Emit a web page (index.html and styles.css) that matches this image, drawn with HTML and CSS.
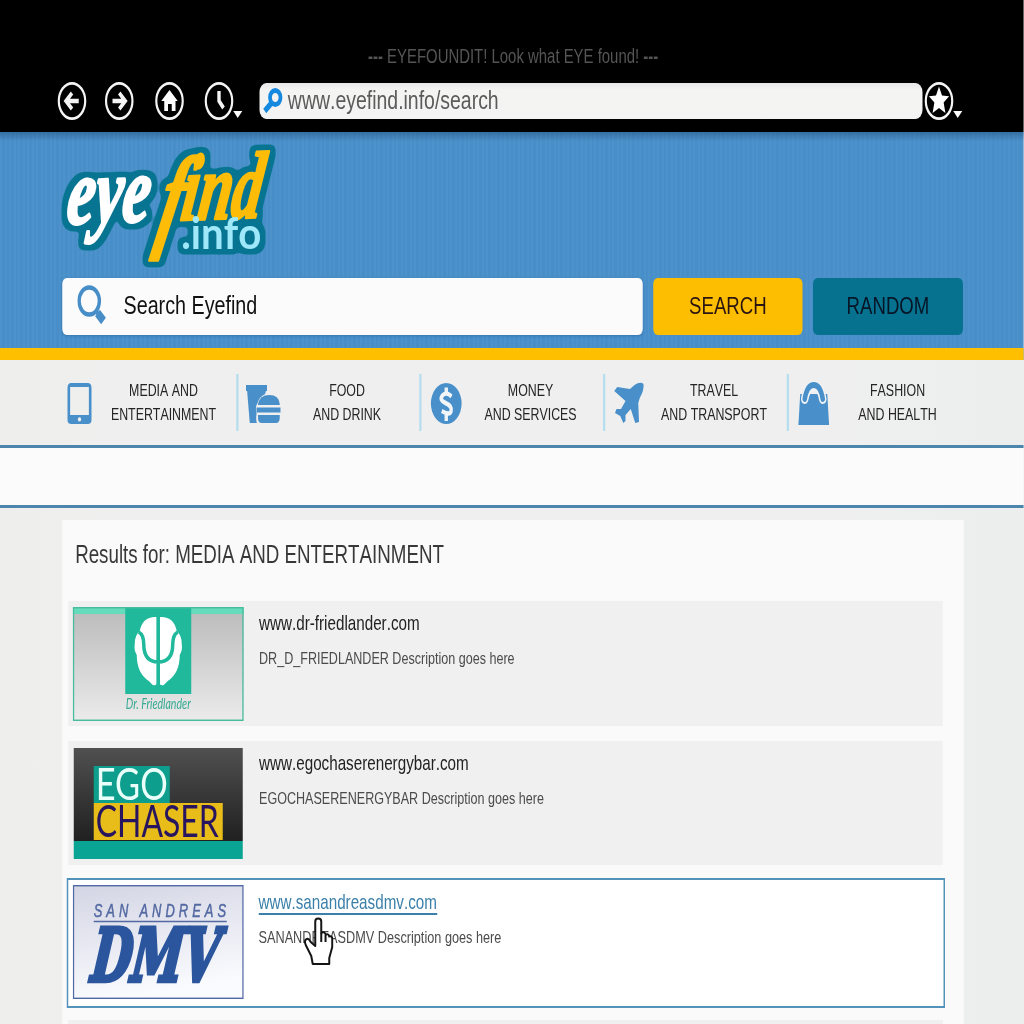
FILE: index.html
```html
<!DOCTYPE html>
<html lang="en">
<head>
<meta charset="utf-8">
<title>Eyefind.info</title>
<link rel="stylesheet" href="styles.css">
</head>
<body>
<div class="screen">
  <header class="browser">
    <p class="ticker"><b>---</b> EYEFOUNDIT! Look what EYE found! <b>---</b></p>
    <div class="toolbar">
      <svg class="tool" viewBox="0 0 40 40"><circle cx="20" cy="20" r="17.6"/><path class="thick" d="M29 20H13M20 12l-8 8 8 8"/></svg>
      <svg class="tool forward" viewBox="0 0 40 40"><circle cx="20" cy="20" r="17.6"/><path class="thick" d="M11 20h16M20 12l8 8-8 8"/></svg>
      <svg class="tool home" viewBox="0 0 40 40"><circle cx="20" cy="20" r="17.6"/><path class="solid" d="M20 9L31 20h-3v10h-5v-7h-5v7h-5V20H9z"/></svg>
      <svg class="tool history" viewBox="0 0 54 40"><circle cx="20" cy="20" r="17.6"/><path class="thick" d="M20 10v10l6 7"/><path class="solid" d="M39 30h12l-6 7z"/></svg>
      <div class="address">
        <svg class="glass" viewBox="0 0 28 26"><circle cx="17" cy="9.5" r="7"/><path d="M12 15L3 23"/></svg>
        <span>www.eyefind.info/search</span>
      </div>
      <svg class="tool star" viewBox="0 0 54 40"><circle cx="20" cy="20" r="17.6"/><path class="solid" d="M20 5.500l4 9 9.500.8-7.300 6.200 2.300 10.500-8.500-5-8.500 5 2.300-10.500L6.500 15.300l9.500-.8z"/><path class="solid" d="M39 30h12l-6 7z"/></svg>
    </div>
  </header>

  <section class="masthead">
    <svg class="logo" viewBox="0 0 224 128" preserveAspectRatio="none">
      <defs>
        <filter id="halo" x="-10%" y="-15%" width="120%" height="130%" color-interpolation-filters="sRGB">
          <feMorphology in="SourceAlpha" operator="dilate" radius="3.500"/>
          <feGaussianBlur stdDeviation="2.400"/>
          <feComponentTransfer result="edge"><feFuncA type="linear" slope="7" intercept="-1.400"/></feComponentTransfer>
          <feFlood flood-color="#077591"/>
          <feComposite in2="edge" operator="in"/>
          <feMerge><feMergeNode/><feMergeNode in="SourceGraphic"/></feMerge>
        </filter>
      </defs>
      <g filter="url(#halo)">
        <text class="word white" transform="translate(6 82) rotate(-2) skewX(-8)" textLength="83" lengthAdjust="spacingAndGlyphs">eye</text>
        <text class="word gold eff" transform="translate(95 94) skewX(-12) scale(.62 1)">f</text>
        <text class="word gold" transform="translate(120 78) rotate(-2) skewX(-10)" textLength="80" lengthAdjust="spacingAndGlyphs">ind</text>
        <text class="dot" x="122" y="107" textLength="80" lengthAdjust="spacingAndGlyphs">.info</text>
      </g>
    </svg>
    <div class="search">
      <div class="field">
        <svg class="lens" viewBox="0 0 40 40"><circle cx="16" cy="16" r="13.500"/><path class="neck" d="M25 26l4 4"/><path class="grip" d="M27 28l8 8"/></svg>
        <span>Search Eyefind</span>
      </div>
      <div class="button go">SEARCH</div>
      <div class="button random">RANDOM</div>
    </div>
  </section>

  <nav class="categories">
    <a class="category"><svg viewBox="0 0 52 56"><path fill-rule="evenodd" d="M15 7h22q5 0 5 5v32q0 4-5 4H15q-5 0-5-4V12q0-5 5-5zm-1.500 4v28h25V11zM26 41.200a2.200 2.200 0 1 0 .01 0z"/></svg><span>MEDIA AND<br>ENTERTAINMENT</span></a>
    <a class="category"><svg viewBox="0 0 52 56"><path d="M3 9h28v6h-1.500l-1 3q-8 3-10 9-3 3-2 8 1 3 0 6 0 4 1 6H8L4.500 15H3z"/><path d="M19 28q2-9 15-9t14 9v1H19z"/><path d="M17 31.500h32v5H17z"/><path d="M19 39h29v2q0 6-5 6H24q-5 0-5-5z"/></svg><span>FOOD<br>AND DRINK</span></a>
    <a class="category"><svg viewBox="0 0 52 56"><circle cx="26" cy="27.500" r="20.500"/><path class="cut" d="M33 20.500Q26 15 21 19.500t4 7.500q9 3 7.500 8T20 35M26 11.500v6M26 37v8"/></svg><span>MONEY<br>AND SERVICES</span></a>
    <a class="category"><svg viewBox="0 0 52 56"><path d="M44 8q1 6-5 14l-2 5 1 19-5 1-6-14-7 6v6l-3 2-4-7-7-3 2-4h6l6-8-15-10 4-4 17 2 6-4q8-4 12-1z"/></svg><span>TRAVEL<br>AND TRANSPORT</span></a>
    <a class="category"><svg viewBox="0 0 52 56"><path d="M8 18h36l2.500 31h-41z"/><path class="gap" d="M14 23q3-13 12-13t12 13"/><path class="handle" d="M14 23q3-14 12-14t12 14"/></svg><span>FASHION<br>AND HEALTH</span></a>
  </nav>
  <div class="strip"></div>

  <main class="results">
    <h1>Results for: MEDIA AND ENTERTAINMENT</h1>
    <article class="result">
      <svg class="thumb" viewBox="0 0 171 114" preserveAspectRatio="none">
        <defs><linearGradient id="silver" x1="0" y1="0" x2="0" y2="1"><stop offset="0" stop-color="#bababa"/><stop offset="1" stop-color="#ebebeb"/></linearGradient></defs>
        <rect width="171" height="114" fill="url(#silver)"/>
        <rect width="171" height="7" fill="#67dcbd"/>
        <rect x="52.500" width="66" height="87" fill="#20b99b"/>
        <path fill="#fff" d="M84 10q-14-1-17 14-5 4-5 13-1 6 2 11 0 18 12 26l4 4q4 1 4-2z"/>
        <path fill="#fff" d="M87 10q14-1 17 14 5 4 5 13 1 6-2 11 0 18-12 26l-4 4q-4 1-4-2z"/>
        <path fill="none" stroke="#20b99b" stroke-width="3.500" d="M66 25q5 3 5 12 0 18 14.500 18t14.500-18q0-9 5-12M85.500 9v70"/>
        <text class="doctor" x="53" y="102" textLength="65" lengthAdjust="spacingAndGlyphs">Dr. Friedlander</text>
        <rect x=".7" y=".7" width="169.600" height="112.600" fill="none" stroke="#48bd9d" stroke-width="1.500"/>
      </svg>
      <div class="info"><a>www.dr-friedlander.com</a><p>DR_D_FRIEDLANDER Description goes here</p></div>
    </article>
    <article class="result second">
      <svg class="thumb" viewBox="0 0 171 114" preserveAspectRatio="none">
        <defs><linearGradient id="coal" x1="0" y1="0" x2="0" y2="1"><stop offset="0" stop-color="#505050"/><stop offset="1" stop-color="#202020"/></linearGradient></defs>
        <rect x="1" y="1" width="169" height="93" fill="url(#coal)"/>
        <rect x="1" y="94" width="169" height="18" fill="#09a493"/>
        <rect x="21" y="19" width="76" height="37" fill="#0d9e8d"/>
        <rect x="21" y="56" width="129" height="37" fill="#e8bd19"/>
        <text class="ego" x="23" y="53" textLength="72" lengthAdjust="spacingAndGlyphs">EGO</text>
        <text class="chaser" x="23" y="90" textLength="123" lengthAdjust="spacingAndGlyphs">CHASER</text>
      </svg>
      <div class="info"><a>www.egochaserenergybar.com</a><p>EGOCHASERENERGYBAR Description goes here</p></div>
    </article>
    <article class="result selected">
      <svg class="thumb" viewBox="0 0 171 114" preserveAspectRatio="none">
        <defs><linearGradient id="mist" x1="0" y1="0" x2=".25" y2="1"><stop offset="0" stop-color="#d3d5e4"/><stop offset="1" stop-color="#fafbfe"/></linearGradient></defs>
        <rect x=".7" y=".7" width="169.600" height="112.600" fill="url(#mist)" stroke="#5068a3" stroke-width="1.400"/>
        <text class="andreas" transform="translate(21 32) scale(.7 1)" textLength="189">SAN ANDREAS</text>
        <path d="M21 36.500h133" stroke="#5369a2" stroke-width="1.500"/>
        <text class="dmv" transform="translate(14 96) skewX(-13)" textLength="127" lengthAdjust="spacingAndGlyphs">DMV</text>
      </svg>
      <div class="info"><a>www.sanandreasdmv.com</a><p>SANANDREASDMV Description goes here</p></div>
    </article>
    <article class="result next"></article>
  </main>
  <svg class="cursor" viewBox="-1 0 30 50" preserveAspectRatio="none"><path d="M8 47L6.500 39 1 28q-2-5 1-6 2-1 4 3l4.500 4V4.500q0-3 3-3t3 3V16q3-2 4.500 1.500 3-1 3.500 2 3-1 3 2.500v8l-3 11v6z"/><path d="M16.500 16v9M20.800 18v7"/></svg>
</div>
</body>
</html>
```
FILE: styles.css
```css
* { box-sizing: border-box; }

html { overflow: hidden; }

body {
  position: relative;
  margin: 0;
  width: 1024px;
  height: 1024px;
  overflow: hidden;
  background: #efefed;
}

.screen {
  position: relative;
  width: 1365.34px;
  height: 1024px;
  overflow: hidden;
  transform: scaleX(.75);
  transform-origin: 0 0;
  font-family: "Liberation Sans", Arial, sans-serif;
  font-kerning: none;
  color: #222;
  background: linear-gradient(90deg, #eeefec, #efefef 12%, #efefef 80%, #eceeee);
}

.browser { height: 132px; background: #000; padding-top: 44px; }
.ticker {
  margin: 0;
  padding-left: 3px;
  text-align: center;
  font-size: 19.9px;
  line-height: 24px;
  color: #555;
}
.toolbar { display: flex; align-items: center; height: 38px; margin-top: 13.500px; padding-left: 76px; }
.tool { flex: none; width: 40px; height: 40px; fill: none; stroke: #f4f4f4; stroke-width: 2.900; }
.tool .thick { stroke-width: 4.500; }
.tool .solid { fill: #fff; stroke: none; }
.forward { margin-left: 22.500px; }
.home { margin-left: 27px; }
.history { width: 54px; margin-left: 26px; }
.star { width: 54px; margin-left: 2px; }
.address {
  display: flex;
  align-items: center;
  flex: none;
  width: 884px;
  height: 36px;
  margin-left: 20.300px;
  padding-left: 4px;
  border-radius: 9px;
  background: linear-gradient(#e7e7e7, #f4f4f3 20%, #f3f3f3);
  color: #5b5b5b;
  font-size: 25.950px;
}
.glass { width: 28px; height: 26px; margin-right: 6px; fill: none; stroke: #1589df; stroke-width: 5; }
.glass path { stroke-width: 6; }

.masthead {
  height: 228px;
  padding: 10px 0 0 82.700px;
  border-bottom: 12px solid #febf00;
  background:
    linear-gradient(rgba(30, 70, 110, .45), transparent 9px),
    repeating-linear-gradient(90deg, rgba(255, 255, 255, .02) 0 3px, rgba(0, 40, 90, .02) 3px 6px),
    #4990ca;
}
.logo { display: block; width: 298.700px; height: 128px; margin-left: -4px; overflow: visible; }
.logo .word {
  font-family: "Liberation Serif", "Times New Roman", serif;
  font-weight: 700;
  font-style: italic;
  font-size: 94px;
  stroke-width: 3;
  stroke-linejoin: round;
}
.logo .white { fill: #fff; stroke: #fff; }
.logo .gold { fill: #fdbc08; stroke: #fdbc08; }
.logo .eff { font-size: 114px; }
.logo .dot { font-family: Lato, "Open Sans", sans-serif; font-weight: 700; font-size: 44px; fill: #9ee8fa; }
.search { display: flex; gap: 14px; margin-top: 7.500px; }
.field {
  display: flex;
  flex: none;
  align-items: center;
  width: 774px;
  height: 57px;
  padding: 0 0 2px 20px;
  border-radius: 6px;
  background: #fbfbfb;
  box-shadow: 0 1px 3px rgba(30, 80, 130, .4);
  color: #111;
  font-size: 26.300px;
}
.lens { width: 40px; height: 40px; margin-right: 22px; fill: none; stroke: #478ec9; stroke-width: 4.500; }
.lens .grip { stroke-width: 9; }
.button {
  flex: none;
  width: 199.500px;
  height: 57px;
  border-radius: 6px;
  text-align: center;
  font-size: 24.800px;
  line-height: 56px;
}
.go { background: #fdbd00; color: #2b1510; }
.random { background: #06728f; color: #061526; }

.categories {
  display: flex;
  height: 85px;
  padding: 14px 0 0 73px;
}
.category {
  display: flex;
  width: 244.700px;
  height: 57px;
  padding-left: 7px;
  border-right: 3px solid #b5deee;
}
.category:last-child { border-right: 0; }
.category svg { flex: none; width: 52px; height: 56px; margin-top: 2px; fill: #4990ca; }
.category span { flex: none; width: 172px; padding-top: 4px; text-align: center; font-size: 16.500px; line-height: 24px; color: #242424; }
.category .cut { fill: none; stroke: #f1f5f8; stroke-width: 4.500; }
.category .gap { fill: none; stroke: #f0f3f5; stroke-width: 10; stroke-linecap: round; }
.category .handle { fill: none; stroke: #4990ca; stroke-width: 6; stroke-linecap: round; }
.strip { height: 63px; border: solid #4d86ad; border-width: 3px 0; background: #fbfbfb; }

.results {
  display: flex;
  flex-direction: column;
  width: 1202px;
  height: 504px;
  overflow: hidden;
  margin: 12px 0 0 82.700px;
  padding: 0 0 0 8px;
  background: #fafafa;
}
h1 { flex: none; margin: 0; height: 81px; padding: 20px 0 0 9.500px; font-size: 25px; font-weight: 400; line-height: 28px; color: #383838; }
.result { display: flex; flex: none; width: 1166.700px; height: 125px; padding: 6px 0 0 6.700px; background: #f0f0f0; }
.second { margin-top: 15px; height: 124px; }
.thumb { flex: none; width: 228px; height: 114px; }
.info { padding: 6px 0 0 20px; }
.info a { display: inline-block; font-size: 20.300px; line-height: 21px; color: #222; }
.info p { margin: 15px 0 0; font-size: 16.750px; line-height: 20px; color: #4b4b4b; }
.selected {
  width: 1171px;
  height: 130px;
  margin: 13px 0 0 -1.300px;
  border: solid #5392bb;
  border-width: 2px 2.700px;
  padding: 5px 0 0 5.300px;
  background: #fff;
}
.selected .info { padding-top: 7px; }
.selected .info a { color: #3b80aa; border-bottom: 2px solid #3b80aa; }
.selected .info p { margin-top: 13px; font-size: 16.950px; }
.next { margin-top: 12px; }

.doctor { font: italic 400 15px Lato, sans-serif; fill: #36aa92; }
.ego, .chaser { font: 400 45px Lato, sans-serif; }
.ego { fill: #e9fffa; }
.chaser { fill: #28155f; }
.andreas { font: italic 400 18.500px "Liberation Sans", sans-serif; fill: #5369a2; stroke: #5369a2; stroke-width: .5; }
.dmv { font: 700 73px "DejaVu Serif", serif; fill: #2b559d; stroke: #2b559d; stroke-width: 4.500; }

.cursor { position: absolute; left: 405px; top: 917px; width: 40px; height: 50px; fill: #fff; stroke: #151515; stroke-width: 2; stroke-linejoin: round; }
```
